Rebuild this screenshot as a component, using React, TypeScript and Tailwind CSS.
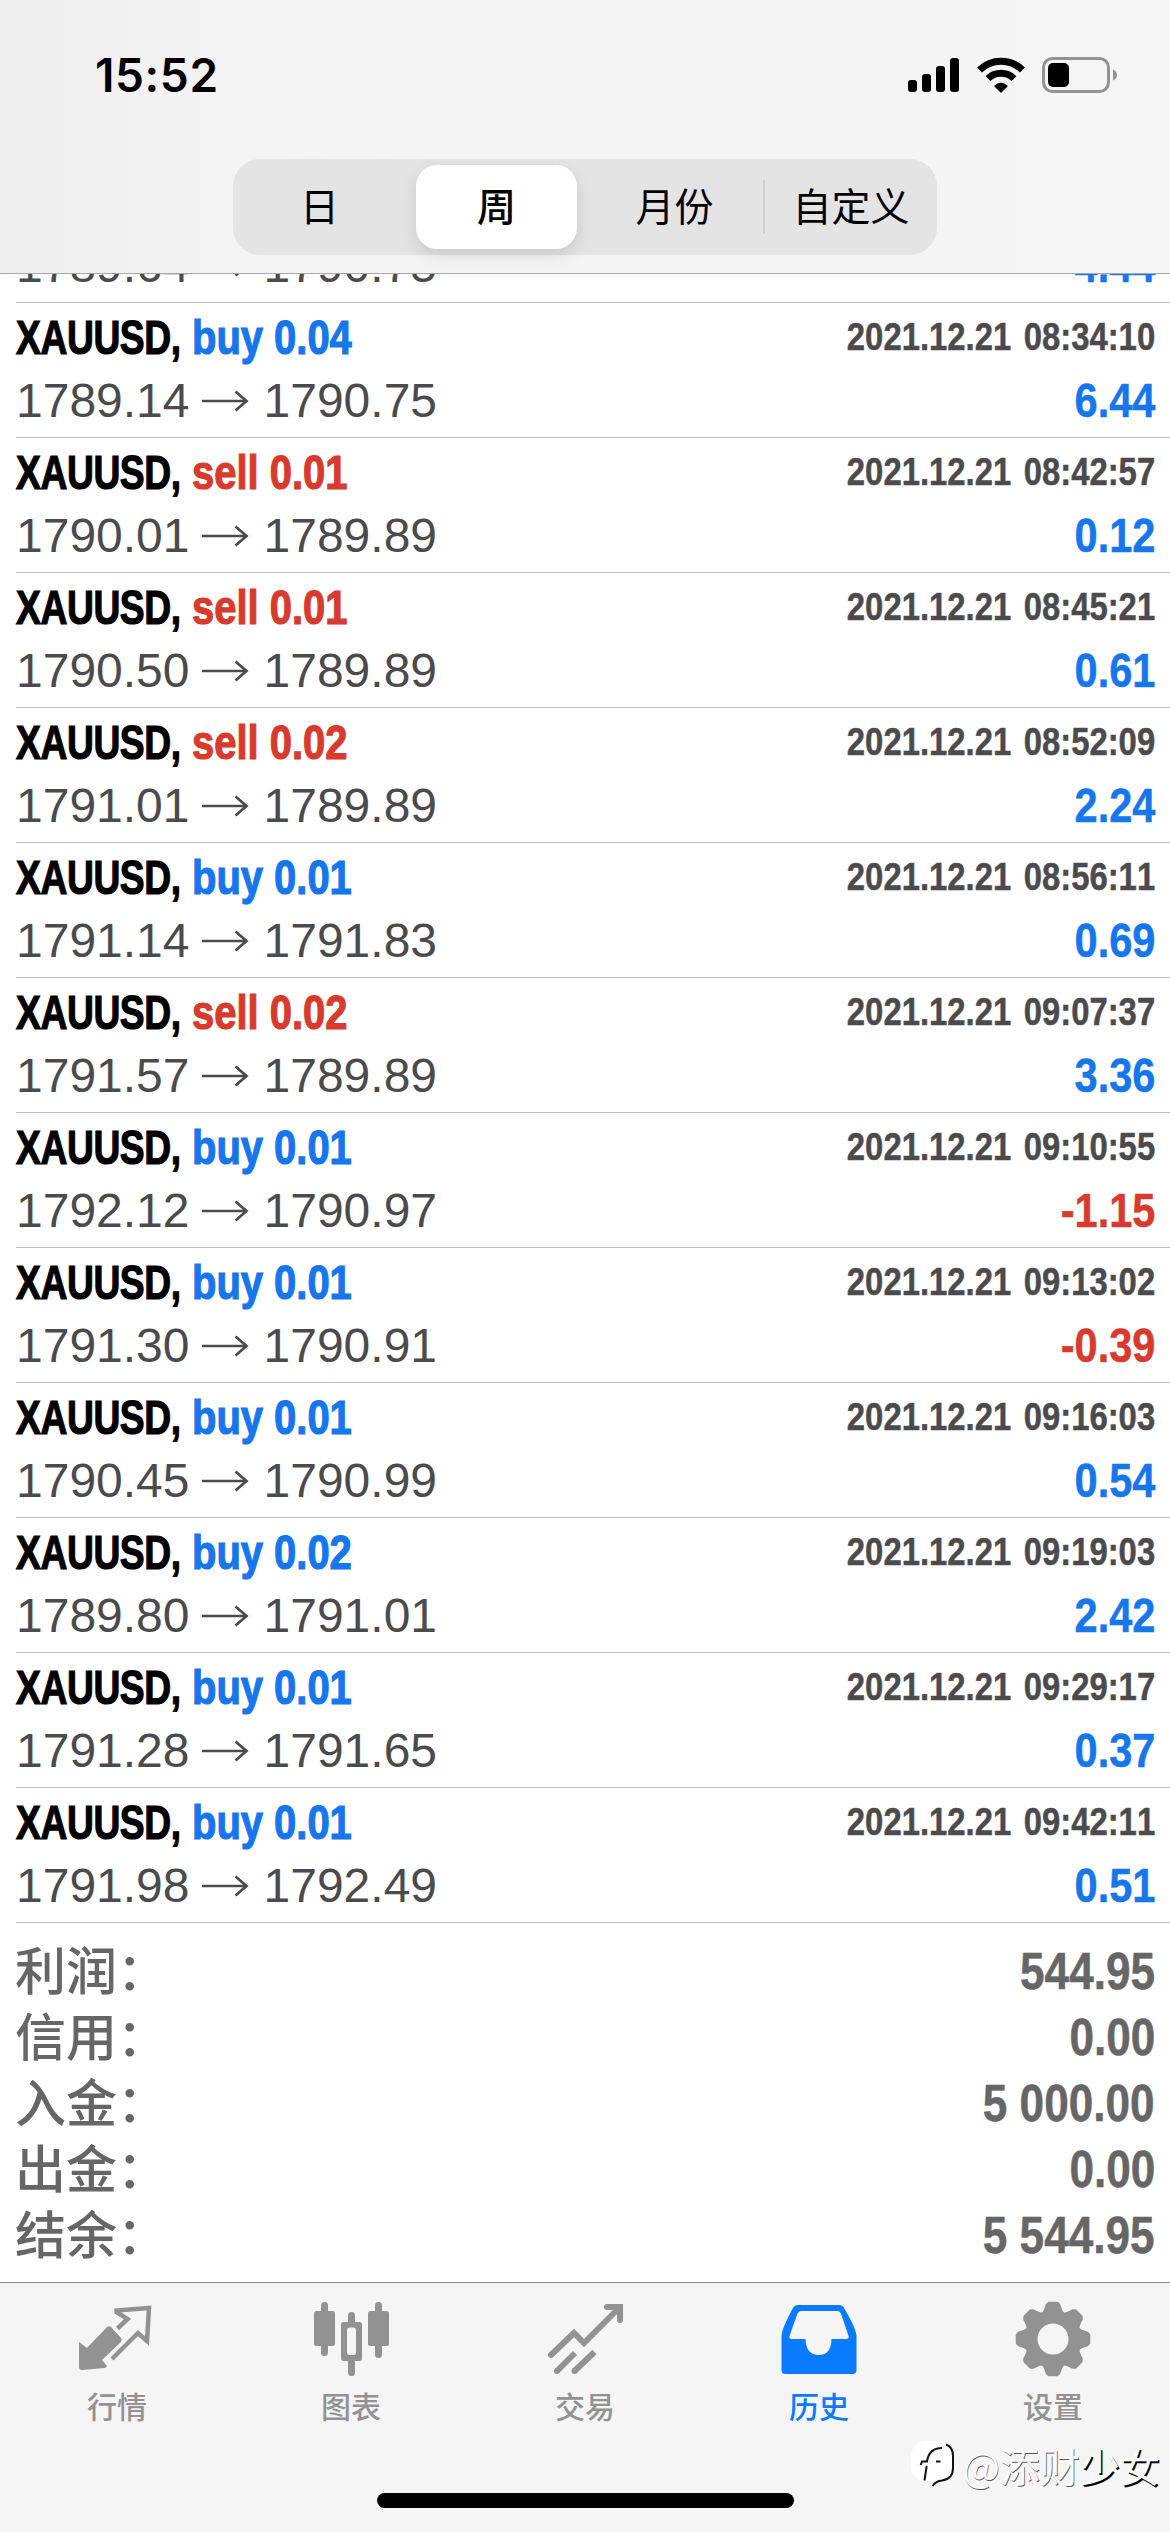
import type { ReactNode } from "react";

type Side = "buy" | "sell";
type Deal = { side: Side; lots: string; open: string; close: string; time: string; profit: string };

const deals: Deal[] = [
  { side: "buy", lots: "0.04", open: "1789.14", close: "1790.75", time: "08:34:10", profit: "6.44" },
  { side: "sell", lots: "0.01", open: "1790.01", close: "1789.89", time: "08:42:57", profit: "0.12" },
  { side: "sell", lots: "0.01", open: "1790.50", close: "1789.89", time: "08:45:21", profit: "0.61" },
  { side: "sell", lots: "0.02", open: "1791.01", close: "1789.89", time: "08:52:09", profit: "2.24" },
  { side: "buy", lots: "0.01", open: "1791.14", close: "1791.83", time: "08:56:11", profit: "0.69" },
  { side: "sell", lots: "0.02", open: "1791.57", close: "1789.89", time: "09:07:37", profit: "3.36" },
  { side: "buy", lots: "0.01", open: "1792.12", close: "1790.97", time: "09:10:55", profit: "-1.15" },
  { side: "buy", lots: "0.01", open: "1791.30", close: "1790.91", time: "09:13:02", profit: "-0.39" },
  { side: "buy", lots: "0.01", open: "1790.45", close: "1790.99", time: "09:16:03", profit: "0.54" },
  { side: "buy", lots: "0.02", open: "1789.80", close: "1791.01", time: "09:19:03", profit: "2.42" },
  { side: "buy", lots: "0.01", open: "1791.28", close: "1791.65", time: "09:29:17", profit: "0.37" },
  { side: "buy", lots: "0.01", open: "1791.98", close: "1792.49", time: "09:42:11", profit: "0.51" },
];

const totals = [
  ["利润：", "544.95"],
  ["信用：", "0.00"],
  ["入金：", "5 000.00"],
  ["出金：", "0.00"],
  ["结余：", "5 544.95"],
];

function StatusBar() {
  return (
    <div className="flex h-[150px] items-center justify-between pl-[95px] pr-[53px]">
      <span className="font-['Inter'] text-[46px] font-semibold leading-[50px] tracking-[0.6px]">15:52</span>
      <div className="flex items-center gap-[17px]">
        <svg width="52" height="36" viewBox="0 0 52 36" fill="#000">
          <rect x="0" y="23" width="9" height="12" rx="3" />
          <rect x="14" y="17" width="9" height="18" rx="3" />
          <rect x="28" y="9" width="9" height="26" rx="3" />
          <rect x="42" y="1" width="9" height="34" rx="3" />
        </svg>
        <svg width="48" height="36" viewBox="0 0 48 36" fill="none" stroke="#000">
          <path d="M2.6 12.9 A30.5 30.5 0 0 1 45.4 12.9" strokeWidth="7" />
          <path d="M11 21.6 A18.5 18.5 0 0 1 37 21.6" strokeWidth="6.8" />
          <path d="M24 36 L17 29 Q24 22.5 31 29 Z" fill="#000" stroke="none" />
        </svg>
        <svg width="75" height="36" viewBox="0 0 75 36" fill="none">
          <rect x="1.5" y="1.5" width="65" height="33" rx="9" stroke="#929292" strokeWidth="3" />
          <rect x="6" y="6" width="21" height="24" rx="5" fill="#000" />
          <path d="M71 12.5 Q75 14.5 75 18 Q75 21.5 71 23.5 Z" fill="#929292" />
        </svg>
      </div>
    </div>
  );
}

function Segments() {
  return (
    <div className="mx-auto mt-[9px] flex h-[96px] w-[704px] rounded-[27px] bg-[#e4e4e5] py-[6px] text-center font-['Noto_Sans_CJK_SC',sans-serif] text-[39px] leading-[78px]">
      <span className="w-[173px]">日</span>
      <span className="ml-[10px] h-[84px] w-[161px] rounded-[21px] bg-white font-medium shadow-[0_6px_16px_rgba(0,0,0,0.12)]">周</span>
      <span className="ml-[9px] w-[177px]">月份</span>
      <i className="mt-[15px] h-[54px] w-[2px] bg-[#cfcfd1]" />
      <span className="flex-1">自定义</span>
    </div>
  );
}

function Arrow() {
  return (
    <svg className="mx-[12.5px]" width="49" height="34" viewBox="0 0 49 34" fill="none" stroke="#4b4b4d" strokeWidth="2.7">
      <path d="M0 17 H44 M33.500 7.500 L44.500 17 L33.500 26.500" />
    </svg>
  );
}

function Prices({ open, close }: { open: string; close: string }) {
  return (
    <div className="flex items-center text-[48px] leading-[54px] text-[#4b4b4d]">
      <span>{open}</span>
      <Arrow />
      <span>{close}</span>
    </div>
  );
}

function Profit({ value }: { value: string }) {
  const tone = value.startsWith("-") ? "text-[#d83b2d]" : "text-[#1676ec]";
  return (
    <span className={`origin-right scale-x-[0.865] text-[48px] font-bold leading-[54px] [-webkit-text-stroke:0.5px] ${tone}`}>{value}</span>
  );
}

function DealRow({ deal }: { deal: Deal }) {
  const tone = deal.side === "buy" ? "text-[#1676ec]" : "text-[#d83b2d]";
  return (
    <li className="ml-[16px] h-[135px] border-b border-[#bfbfc1] pr-[15px] pt-[4px]">
      <div className="flex h-[62px] items-center justify-between font-bold">
        <div className="flex text-[48px] leading-[54px] [-webkit-text-stroke:1.2px]">
          <span className="w-[176px] origin-left scale-x-[0.775] whitespace-nowrap tracking-[-0.5px]">XAUUSD,</span>
          <span className={`origin-left scale-x-[0.832] whitespace-nowrap ${tone}`}>
            {deal.side} {deal.lots}
          </span>
        </div>
        <span className="mt-[-2px] origin-right scale-x-[0.842] whitespace-nowrap text-[39px] leading-[54px] text-[#4b4b4d] [font-kerning:none] [-webkit-text-stroke:0.5px] [word-spacing:4px]">
          2021.12.21 {deal.time}
        </span>
      </div>
      <div className="mt-[5px] flex items-center justify-between">
        <Prices open={deal.open} close={deal.close} />
        <Profit value={deal.profit} />
      </div>
    </li>
  );
}

function Tab({ label, active, children }: { label: string; active?: boolean; children: ReactNode }) {
  return (
    <div className={`flex flex-1 flex-col items-center pt-[17px] ${active ? "text-[#0a7aff]" : "text-[#929292]"}`}>
      <svg width="78" height="78" viewBox="0 0 78 78" fill="currentColor">
        {children}
      </svg>
      <span className="mt-[5px] font-['Noto_Sans_CJK_SC',sans-serif] text-[30px] font-medium leading-[44px]">{label}</span>
    </div>
  );
}

function Gear() {
  return (
    <>
      <g stroke="currentColor" strokeWidth="3" strokeLinejoin="round">
        {[0, 45, 90, 135, 180, 225, 270, 315].map((a) => (
          <path key={a} d="M27 16 Q31 13 33 5 L35 3.200 H43 L45 5 Q47 13 51 16 Z" transform={`rotate(${a} 39 39)`} />
        ))}
      </g>
      <circle cx="39" cy="39" r="22" fill="none" stroke="currentColor" strokeWidth="13" />
    </>
  );
}

function TabBar() {
  return (
    <nav className="relative h-[250px] border-t border-[#858587] bg-[#f5f5f5]">
      <div className="flex">
        <Tab label="行情">
          <path d="M1 42 L9 48 L29 27 Q31 25.500 33 27 L43 38 Q44.500 40 43 42 L24 60 L29 66 L27 68 L4 70 Q1 70 1 67 Z" />
          <path d="M39.500 28.500 L49.500 19 L38.500 12 V10.500 L71 8 L69 41 L60 33 L34 59" fill="none" stroke="currentColor" strokeWidth="4.5" />
        </Tab>
        <Tab label="图表">
          <rect x="2" y="11" width="21" height="35" rx="2.500" />
          <rect x="9" y="2" width="7" height="54" rx="3.500" />
          <path fillRule="evenodd" d="M31.500 22 H47.500 Q50 22 50 24.500 V58.500 Q50 61 47.500 61 H31.500 Q29 61 29 58.500 V24.500 Q29 22 31.500 22 Z M37.500 27.500 Q35 27.500 35 30 V52 Q35 55 37.500 55 H41.500 Q44 55 44 52 V30 Q44 27.500 41.500 27.500 Z" />
          <rect x="36" y="12" width="7" height="15" rx="3.500" />
          <rect x="36" y="56" width="7" height="20" rx="3.500" />
          <rect x="56" y="11" width="21" height="35" rx="2.500" />
          <rect x="63" y="2" width="7" height="56" rx="3.500" />
        </Tab>
        <Tab label="交易">
          <g fill="none" stroke="currentColor" strokeWidth="6">
            <path d="M5 55 L28 33 L38 43 L72 9" strokeLinecap="round" />
            <path d="M61 7 H74 V20" strokeLinecap="round" />
            <path d="M11 71 L29 53 M28.500 71 L48.500 52" />
            <path d="M11 71 h0.010 M28.500 71 h0.010" strokeLinecap="round" />
          </g>
        </Tab>
        <Tab label="历史" active>
          <path fillRule="evenodd" d="M18 5 H59 Q62.500 5 64 8 Q76 28 76.500 36 V70 Q76.500 74 72.500 74 H5.500 Q1.500 74 1.500 70 V36 Q2 28 13 8 Q14.500 5 18 5 Z M21 11 Q18.500 11 17.500 13.500 L9.500 36 Q8.500 39 12 39 H25.500 Q26 55 39 55 Q51 55 51.500 39 H66 Q69.500 39 68.500 36 L61 13.500 Q60 11 57.500 11 Z" />
        </Tab>
        <Tab label="设置">
          <Gear />
        </Tab>
      </div>
      <div className="absolute bottom-[24px] left-[377px] h-[15px] w-[417px] rounded-full bg-black" />
      <div className="absolute bottom-[37px] right-[10px] flex items-center font-['Noto_Sans_CJK_SC',sans-serif] text-[40px] leading-[60px] text-[#fafafa] [text-shadow:0.7px_0.7px_0_#555]">
        <svg className="mr-[5px]" width="46" height="48" viewBox="0 0 46 48" fill="none">
          <rect x="0" y="0" width="42" height="41" rx="15" fill="#fff" />
          <g stroke="#111" strokeWidth="2">
            <path d="M9.700 24 L11 20.500 H16 Q18 7 31 7 M15.700 25 L13.500 39.500 M25 20.500 H29.500" />
            <path d="M35 3.500 Q42 6 42 15 V27 Q42 38 31 39.500 Q25 40 21.500 45" />
          </g>
        </svg>
        <span>@添财</span>
        <span className="[text-shadow:1.5px_1.5px_0_#000]">少女</span>
      </div>
    </nav>
  );
}

export default function App() {
  return (
    <div className="flex h-[2532px] w-[1170px] flex-col overflow-hidden bg-white font-['Liberation_Sans',Arial,sans-serif] text-black">
      <header className="h-[274px] shrink-0 border-b border-[#a8a8aa] bg-linear-to-r from-[#eeeeef] via-[#f4f4f5] via-20% to-[#f5f5f6]">
        <StatusBar />
        <Segments />
      </header>
      <main className="flex-1 overflow-hidden">
        <div className="ml-[16px] flex h-[29px] items-end justify-between overflow-hidden border-b border-[#bfbfc1] pb-[9px] pr-[15px]">
          <Prices open="1789.64" close="1790.75" />
          <Profit value="4.44" />
        </div>
        <ul>
          {deals.map((deal) => (
            <DealRow key={deal.time} deal={deal} />
          ))}
        </ul>
        <dl className="pl-[15px] pr-[15px] pt-[16px] text-[#666]">
          {totals.map(([label, value]) => (
            <div key={label} className="flex h-[66px] items-center justify-between">
              <dt className="mt-[-9px] font-['Noto_Sans_CJK_SC',sans-serif] text-[51px] font-medium leading-[52px]">{label}</dt>
              <dd className="origin-right scale-x-[0.865] text-[51px] font-bold leading-[56px] [-webkit-text-stroke:0.5px]">{value}</dd>
            </div>
          ))}
        </dl>
      </main>
      <TabBar />
    </div>
  );
}
